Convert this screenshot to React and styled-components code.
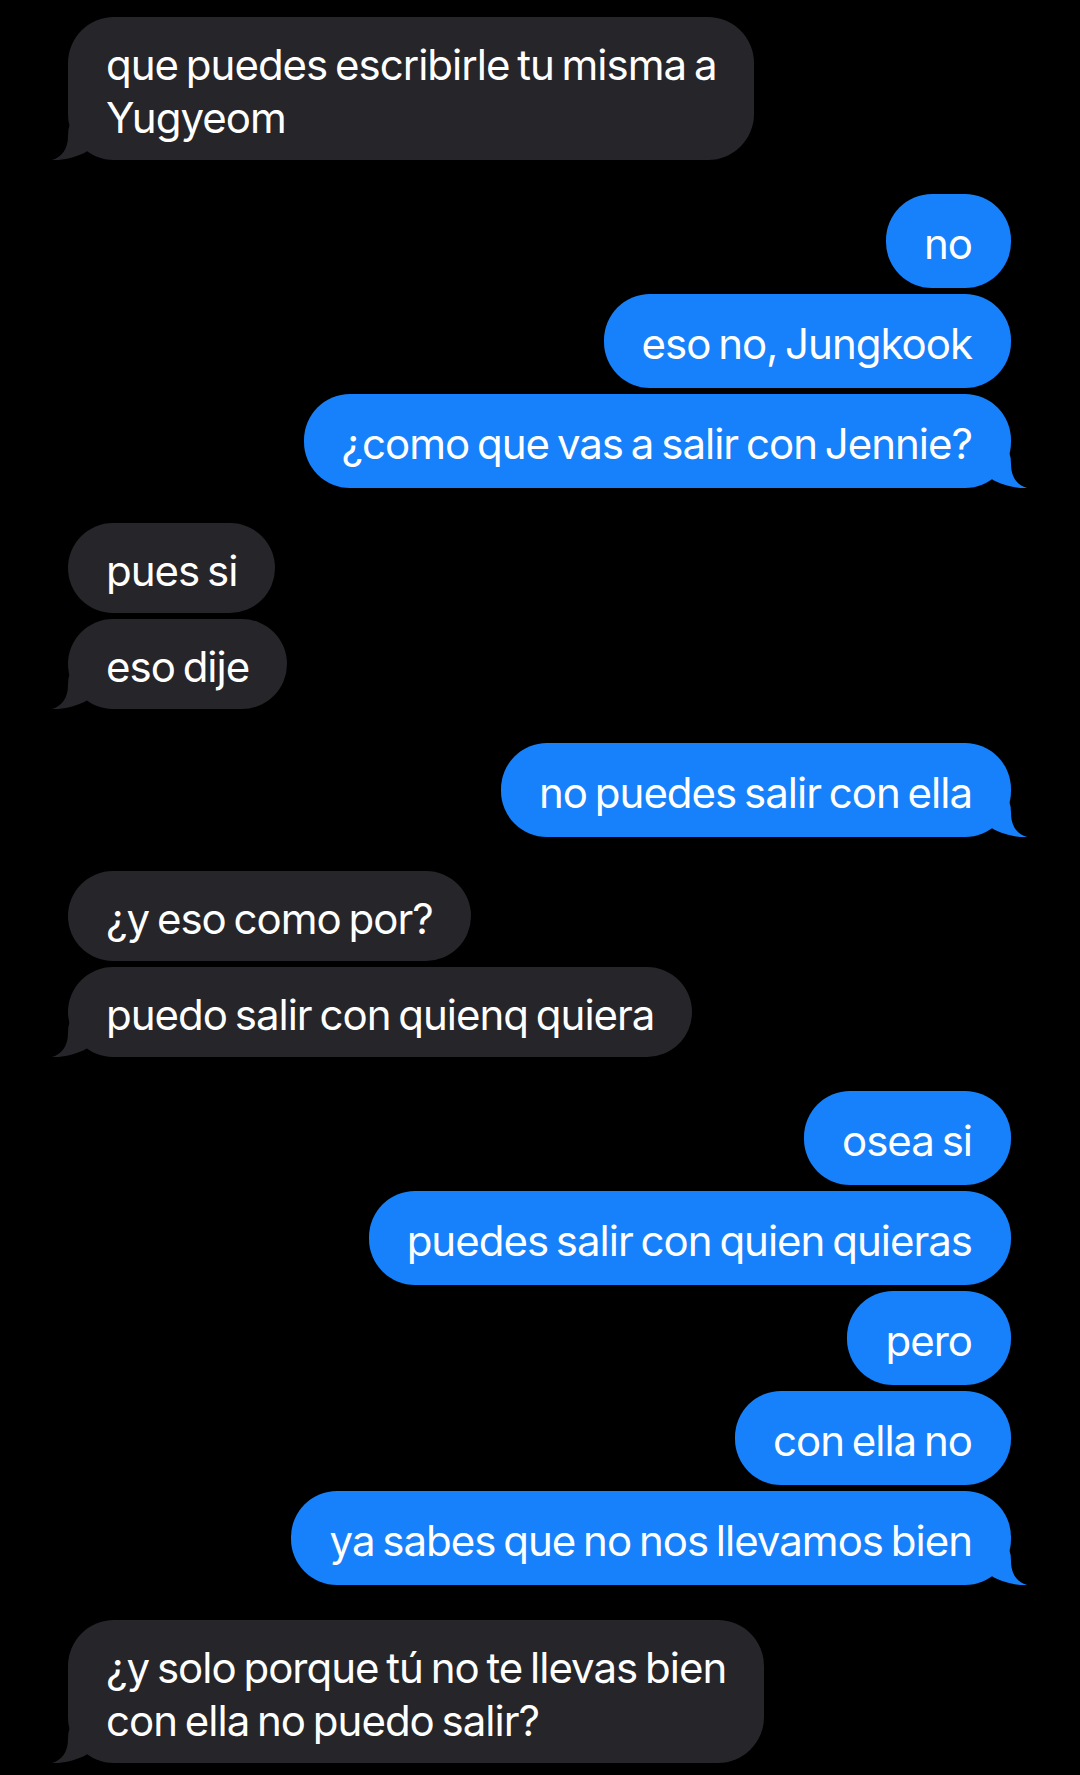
import styled, {createGlobalStyle} from 'styled-components'

const conversation = [
  {side: 'them', items: [['que puedes escribirle tu misma a', 'Yugyeom']]},
  {
    side: 'me',
    items: [['no'], ['eso no, Jungkook'], ['¿como que vas a salir con Jennie?']],
  },
  {side: 'them', items: [['pues si'], ['eso dije']]},
  {side: 'me', items: [['no puedes salir con ella']]},
  {side: 'them', items: [['¿y eso como por?'], ['puedo salir con quienq quiera']]},
  {
    side: 'me',
    items: [
      ['osea si'],
      ['puedes salir con quien quieras'],
      ['pero'],
      ['con ella no'],
      ['ya sabes que no nos llevamos bien'],
    ],
  },
  {
    side: 'them',
    items: [['¿y solo porque tú no te llevas bien', 'con ella no puedo salir?']],
  },
]

const GlobalStyle = createGlobalStyle`
  html, body {
    margin: 0;
    padding: 0;
    background-color: #000000;
  }
  body {
    font-family: Inter, 'Noto Sans', sans-serif;
    -webkit-font-smoothing: antialiased;
  }
`

const Thread = styled.div`
  min-height: 100vh;
  box-sizing: border-box;
  background-color: #000000;
  padding: 17px 69px 0 68px;
  display: flex;
  flex-direction: column;
  gap: 34.3px;
`

const Group = styled.div`
  display: flex;
  flex-direction: column;
  align-items: ${props => (props.$side === 'me' ? 'flex-end' : 'flex-start')};
  gap: 6px;
`

const Bubble = styled.div`
  position: relative;
  box-sizing: border-box;
  padding: ${props => (props.$side === 'me' ? '23px 39px 18px 38px' : '21px 38px 16px 38px')};
  border-radius: 46px;
  background-color: ${props => (props.$side === 'me' ? '#1681fa' : '#262529')};
  color: #ffffff;
  font-size: 42px;
  line-height: 53px;
  letter-spacing: -1px;
  word-spacing: -3px;
  white-space: nowrap;
`

const Tail = styled.svg`
  position: absolute;
  bottom: 0;
  width: 40px;
  height: 36px;
  ${props =>
    props.$side === 'me'
      ? 'right: -16px;'
      : 'left: -16px; transform: scaleX(-1);'}
  fill: ${props => (props.$side === 'me' ? '#1681fa' : '#262529')};
`

const BubbleTail = ({side}) => (
  <Tail $side={side} viewBox="0 0 40 36">
    <path d="M0 0 H22 Q24 5 24 12 C24 25 30 33 40 36 C31 37 15 33 6 28 L0 22 Z" />
  </Tail>
)

export default function App() {
  return (
    <>
      <GlobalStyle />
      <Thread>
        {conversation.map((group, gi) => (
          <Group key={gi} $side={group.side}>
            {group.items.map((lines, i) => (
              <Bubble key={i} $side={group.side}>
                {lines.map((line, li) => (
                  <div key={li}>{line}</div>
                ))}
                {i === group.items.length - 1 && <BubbleTail side={group.side} />}
              </Bubble>
            ))}
          </Group>
        ))}
      </Thread>
    </>
  )
}
